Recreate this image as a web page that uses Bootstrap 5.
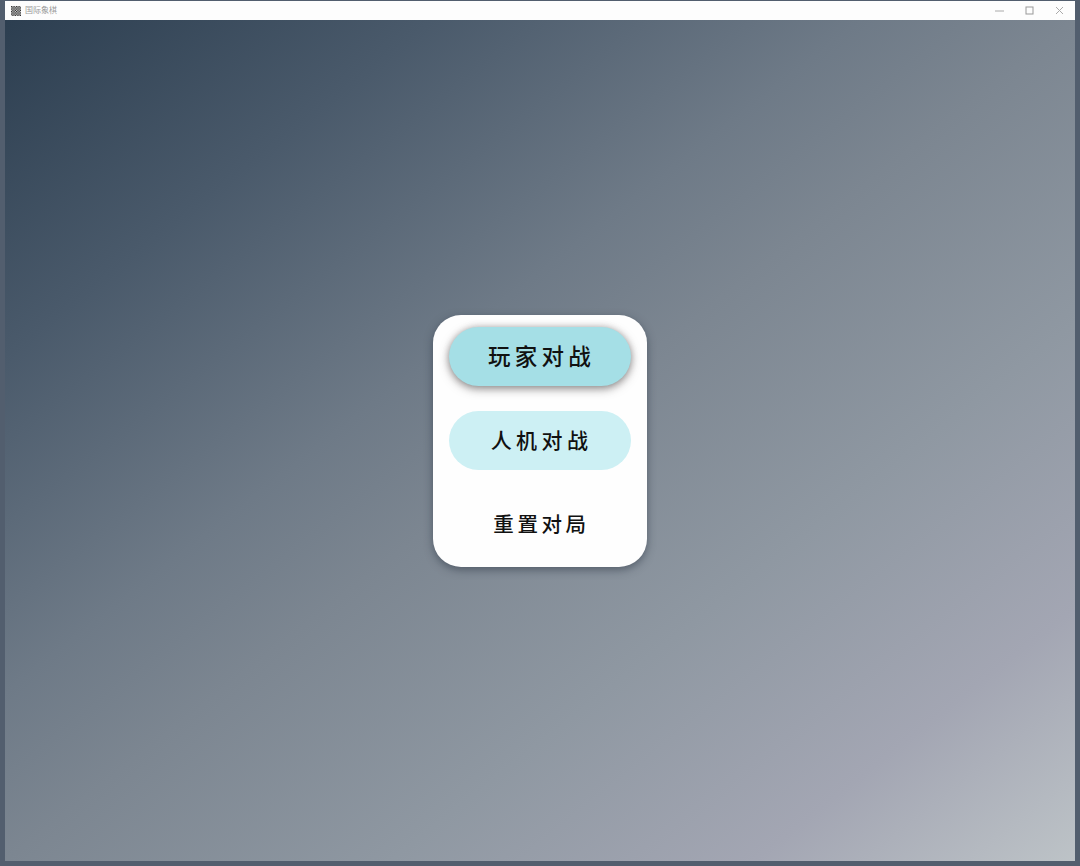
<!DOCTYPE html>
<html lang="zh-CN">
<head>
<meta charset="utf-8">
<title>国际象棋</title>
<link rel="stylesheet" href="https://cdn.jsdelivr.net/npm/bootstrap@5.3.0/dist/css/bootstrap.min.css">
<style>
html, body { height: 100%; margin: 0; }
body { background: #525e6e; overflow: hidden; font-family: "Liberation Sans", "Noto Sans CJK SC", sans-serif; }
.app-frame { width: 1080px; height: 866px; padding: 1px 5px 5px 5px; }
.title-strip { height: 19px; padding-left: 6px; padding-right: 6px; background: #fdfdfd; font-size: 8px; color: #9a9a9a; gap: 4px; }
.win-ctrls { gap: 21px; padding-right: 5px; }
.win-ctrls svg { display: block; }
.game-stage { background: linear-gradient(to bottom right, #2c3e50 0%, #4a5a6b 20%, #6e7a87 40%, #7c8691 50%, #8f98a2 68%, #a3a6b3 85%, #bdc3c7 100%); }
.menu-panel { width: 214px; height: 252px; padding: 12px 16px 13px; gap: 25px; border-radius: 28px; background: #fefefe; box-shadow: 0 3px 9px rgba(35, 45, 60, .5); }
.menu-btn { width: 182px; height: 59px; flex: none; border: 0; padding: 0 0 2px 3px; border-radius: 30px; color: #111; font-family: "Noto Sans CJK SC", "Noto Sans CJK TC", serif; font-weight: 500; font-size: 21px; letter-spacing: 4.4px; line-height: 57px; text-align: center; }
.menu-btn.btn:hover, .menu-btn.btn:active { color: #111; }
.btn-hot { background: #a5dfe6; font-size: 22.5px; letter-spacing: 4.2px; box-shadow: 0 3px 10px rgba(70, 65, 65, .55), 0 0 6px rgba(110, 95, 95, .3); }
.btn-hot.btn:hover { background: #a5dfe6; }
.btn-soft { background: #cdf0f4; }
.btn-soft.btn:hover { background: #cdf0f4; }
.btn-plain { background: transparent; font-size: 20.5px; letter-spacing: 3.6px; }
</style>
</head>
<body>
<div class="app-frame d-flex flex-column">
  <div class="title-strip d-flex align-items-center">
    <svg width="10" height="10" viewBox="0 0 10 10" aria-hidden="true">
      <defs><pattern id="chk" width="2.5" height="2.5" patternUnits="userSpaceOnUse"><rect width="1.25" height="1.25" fill="#222"/><rect x="1.25" y="1.25" width="1.25" height="1.25" fill="#222"/></pattern></defs>
      <rect width="10" height="10" fill="#ddd"/><rect width="10" height="10" fill="url(#chk)"/>
    </svg>
    <span>国际象棋</span>
    <div class="win-ctrls d-flex align-items-center ms-auto">
      <svg width="9" height="9" viewBox="0 0 9 9" aria-hidden="true"><path d="M0 5h9" stroke="#aaa" fill="none"/></svg>
      <svg width="9" height="9" viewBox="0 0 9 9" aria-hidden="true"><rect x="1" y="1" width="7" height="7" stroke="#999" fill="none"/></svg>
      <svg width="9" height="9" viewBox="0 0 9 9" aria-hidden="true"><path d="M1 1l7 7M8 1L1 8" stroke="#aaa" fill="none"/></svg>
    </div>
  </div>
  <main class="game-stage flex-grow-1 d-flex align-items-center justify-content-center">
    <div class="menu-panel d-flex flex-column align-items-center">
      <button type="button" class="btn menu-btn btn-hot">玩家对战</button>
      <button type="button" class="btn menu-btn btn-soft">人机对战</button>
      <button type="button" class="btn menu-btn btn-plain">重置对局</button>
    </div>
  </main>
</div>
<script src="https://cdn.jsdelivr.net/npm/bootstrap@5.3.0/dist/js/bootstrap.bundle.min.js"></script>
</body>
</html>
